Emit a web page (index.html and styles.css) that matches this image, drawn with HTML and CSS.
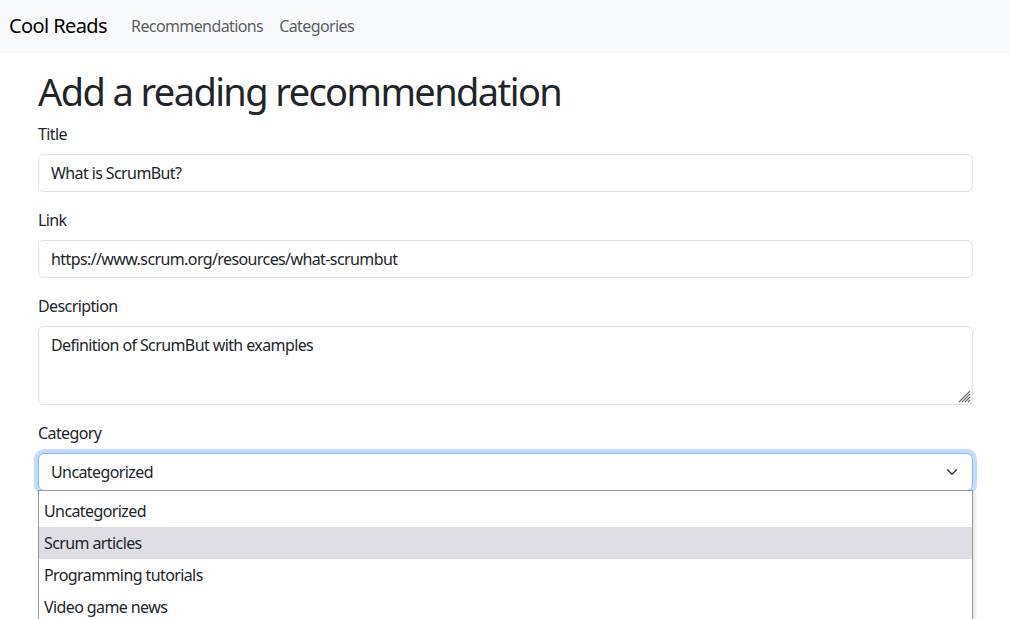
FILE: index.html
```html
<!DOCTYPE html>
<html lang="en">
<head>
<meta charset="utf-8">
<title>Cool Reads</title>
<link rel="stylesheet" href="styles.css">
</head>
<body>
<nav class="navbar">
  <a class="brand" href="#">Cool Reads</a>
  <a class="nav-link" href="#">Recommendations</a>
  <a class="nav-link" href="#">Categories</a>
</nav>
<main class="container">
  <h1 class="heading">Add a reading recommendation</h1>
  <form class="form">
    <div class="field">
      <label class="label">Title</label>
      <div class="control">What is ScrumBut?</div>
    </div>
    <div class="field">
      <label class="label">Link</label>
      <div class="control">https://www.scrum.org/resources/what-scrumbut</div>
    </div>
    <div class="field">
      <label class="label">Description</label>
      <div class="control textarea">Definition of ScrumBut with examples
        <svg class="grip" width="14" height="14" viewBox="0 0 14 14"><path d="M13 2 2 13M13 5 5 13M13 8 8 13M13 11 11 13" stroke="#6e6e6e" stroke-width="1.1" fill="none"/></svg>
      </div>
    </div>
    <div class="field select-field">
      <label class="label">Category</label>
      <div class="control select">
        <span>Uncategorized</span>
        <svg class="chevron" width="16" height="16" viewBox="0 0 16 16"><path d="m2 5 6 6 6-6" fill="none" stroke="#343a40" stroke-linecap="round" stroke-linejoin="round" stroke-width="2"/></svg>
      </div>
      <ul class="popup">
        <li class="opt">Uncategorized</li>
        <li class="opt hover">Scrum articles</li>
        <li class="opt">Programming tutorials</li>
        <li class="opt">Video game news</li>
      </ul>
    </div>
  </form>
</main>
</body>
</html>
```
FILE: styles.css
```css
* { box-sizing: border-box; }
html, body { margin: 0; padding: 0; }
body {
  font-family: "Noto Sans", "Open Sans", sans-serif;
  font-size: 16px;
  line-height: 24px;
  letter-spacing: -0.6px;
  color: #212529;
  background: #fff;
  overflow: hidden;
  height: 619px;
}
.navbar {
  display: flex;
  align-items: center;
  height: 53px;
  background: #f8f9fa;
  padding: 0 9px 1px;
}
.brand {
  font-size: 20px;
  color: #000;
  text-decoration: none;
  margin-right: 16px;
}
.nav-link {
  color: rgba(33, 37, 41, 0.75);
  text-decoration: none;
  padding: 0 8px;
}
.container {
  width: 960px;
  margin: 0 auto;
  padding: 16px 12px 0 13px;
}
.heading {
  font-size: 38px;
  font-weight: 400;
  line-height: 45px;
  letter-spacing: -1.6px;
  margin: 0 0 8px;
}
.form { margin: 0; }
.field { margin-bottom: 16px; }
.label {
  display: block;
  margin-bottom: 8px;
}
.control {
  height: 38px;
  border: 1px solid #dee2e6;
  border-radius: 6px;
  padding: 6px 12px;
  background: #fff;
}
.textarea {
  position: relative;
  height: 79px;
}
.grip { position: absolute; right: 1px; bottom: 1px; }
.select-field { position: relative; }
.select {
  display: flex;
  align-items: center;
  justify-content: space-between;
  border-color: #86b7fe;
  box-shadow: 0 0 0 4px rgba(13, 110, 253, 0.25);
}
.chevron { width: 16px; height: 12px; }
.popup {
  position: absolute;
  left: 0;
  top: 69px;
  width: 935px;
  margin: 0;
  padding: 4px 0 0;
  list-style: none;
  background: #fff;
  border: 1px solid #9a9a9a;
  box-shadow: 2px 2px 4px rgba(0,0,0,0.12);
  height: 140px;
}
.opt {
  height: 32px;
  line-height: 32px;
  padding-left: 5px;
}
.opt.hover { background: #dfdee4; }
```
